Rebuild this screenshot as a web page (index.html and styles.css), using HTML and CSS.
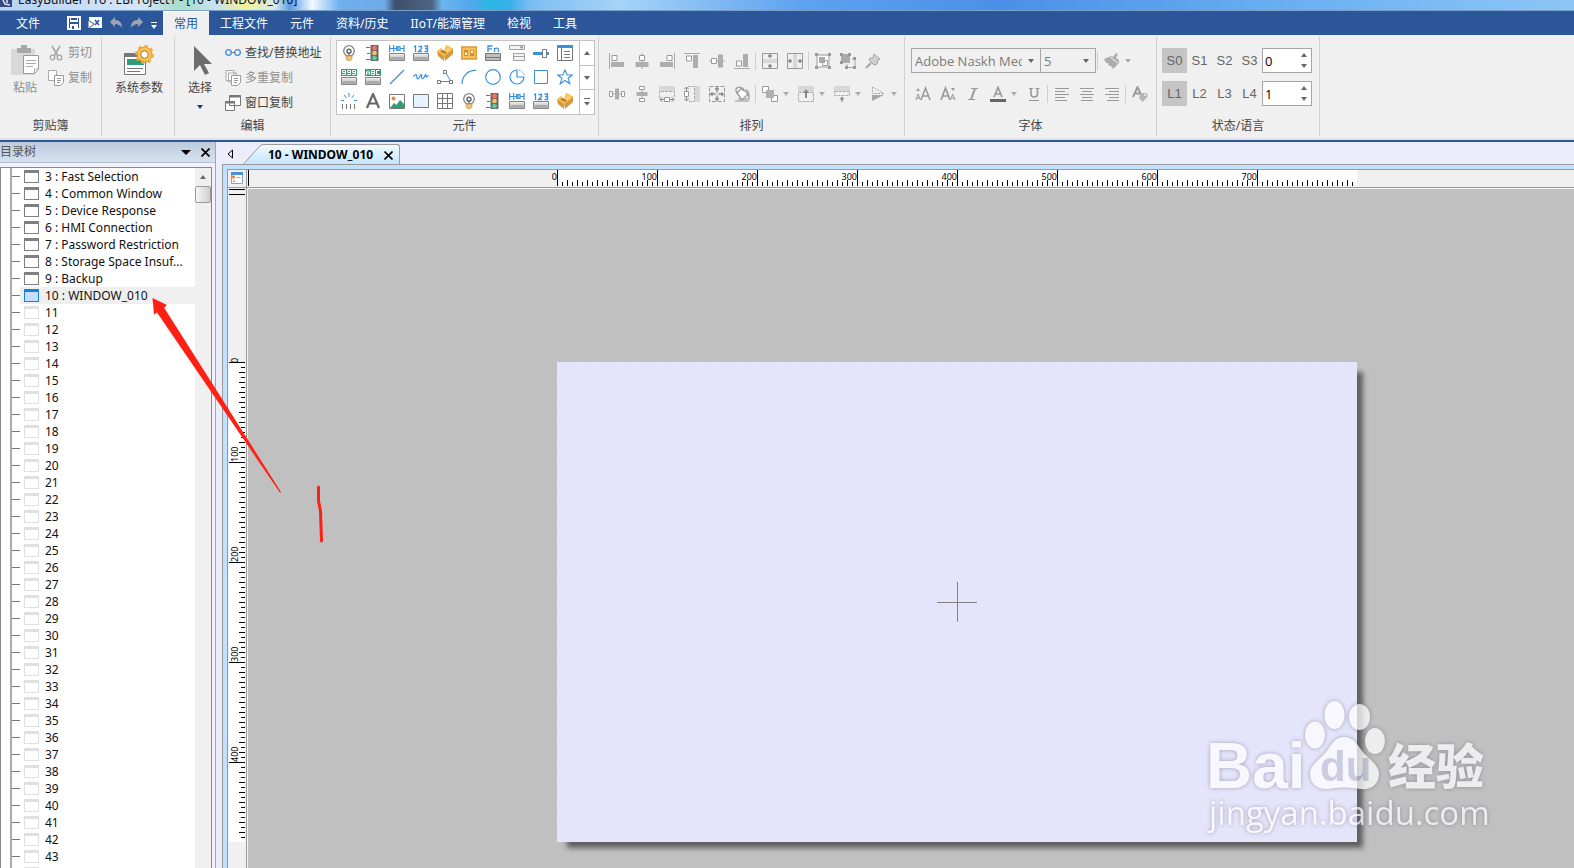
FILE: index.html
```html
<!DOCTYPE html>
<html lang="zh-CN">
<head>
<meta charset="utf-8">
<title>EasyBuilder Pro : EBProject1 - [10 - WINDOW_010]</title>
<link rel="stylesheet" href="styles.css">
</head>
<body>
<svg class="defs" aria-hidden="true">
  <defs>
    <linearGradient id="metal" x1="0" y1="0" x2="0" y2="1"><stop offset="0" stop-color="#f4f4f4"/><stop offset="1" stop-color="#a8a8a8"/></linearGradient>
    <symbol id="i-bulb" viewBox="0 0 16 16"><circle cx="8" cy="6" r="5.3" fill="#fff" stroke="#858585" stroke-width="1.3"/><circle cx="8" cy="6.2" r="2" fill="none" stroke="#555" stroke-width="1.3"/><path d="M8 8v3" stroke="#555"/><path d="M5 11h6v3l-2 2H7l-2-2z" fill="#f2c274" stroke="#b58a45" stroke-width=".6"/></symbol>
    <symbol id="i-traffic" viewBox="0 0 16 16"><path d="M1 2.500h4M2 8.500h3M1 14.500h4" stroke="#707070"/><path d="M5.500 0h8v16h-8z" fill="#6b6b6b"/><circle cx="9.500" cy="3" r="2.300" fill="#ff6d5a"/><circle cx="9.500" cy="8" r="2.300" fill="#ffc165"/><circle cx="9.500" cy="13" r="2.300" fill="#52d49a"/></symbol>
    <symbol id="i-hex" viewBox="0 0 16 16"><path d="M.7 0v7M.7 3.500h4M4.700 0v7M4.700 3.500h3M7.700 1v5M11 1.500H9v4h2zM11 3.500h4M15 0v7" fill="none" stroke="#3a8fd6" stroke-width="1.200"/><path d="M.5 8.500h15v7H.5z" fill="url(#metal)" stroke="#858585"/><path d="M2 13h12" stroke="#8e8e8e"/></symbol>
    <symbol id="i-num" viewBox="0 0 16 16"><path d="M1 2l1.500-1v6M5.500 1.500h3v2l-3 3h3.500M11.500 1h3v5.500h-3M12 3.500h2.500" fill="none" stroke="#3a8fd6" stroke-width="1.300"/><path d="M.5 8.500h15v7H.5z" fill="url(#metal)" stroke="#858585"/><path d="M2 13h12" stroke="#8e8e8e"/></symbol>
    <symbol id="i-switch" viewBox="0 0 16 16"><path d="M0 6l7 4v6l-6-5zM7 10l9-7v6l-8 7z" fill="#d39a3e"/><path d="M0 6l4-3 3 3 2-6 3 1 4 3-9 7z" fill="#fbc052"/><path d="M3 6.500L6 5l2 1.500 3-4 2.500 1.500L8 9z" fill="#b57e2b"/><path d="M8 6.500L11 2l3 2.500-4 3z" fill="#fdd283"/></symbol>
    <symbol id="i-toggle" viewBox="0 0 16 16"><path d="M.7 2h14.600v12H.7z" fill="#fbc052" stroke="#d99a37" stroke-width="1.300"/><path d="M3 5h4v6H3zM9 5h4v6H9z" fill="#c88d34"/><path d="M3.800 7.500h2.400V10H3.800zM9.800 5.800h2.400v2.400H9.800z" fill="#fff3d4"/></symbol>
    <symbol id="i-fn" viewBox="0 0 16 16"><path d="M7.500 1H3v6M3 3.800h4M9.500 7V3M9.500 4.200c1.500-1.800 4-1.300 4 .5V7" fill="none" stroke="#3a8fd6" stroke-width="1.300"/><path d="M.5 8.500h15v7H.5z" fill="#bdbdbd" stroke="#777"/><path d="M1 12.500h14" stroke="#777"/></symbol>
    <symbol id="i-combo" viewBox="0 0 16 16"><path d="M.5.500h15v4H.5zM4.500 8.500h11v7h-11zM4.500 11.500h11" fill="#f4f4f4" stroke="#a0a0a0"/><path d="M10.500 1.500h4l-2 2.500z" fill="#888"/></symbol>
    <symbol id="i-slider" viewBox="0 0 16 16"><path d="M0 8.500h16" stroke="#3a90e0" stroke-width="3"/><path d="M9.500 4.500h4v8h-4z" fill="#fff" stroke="#777"/></symbol>
    <symbol id="i-panel" viewBox="0 0 16 16"><path d="M.5.500h15v15H.5z" fill="#fff" stroke="#777"/><path d="M0 1.500h16" stroke="#3a90e0" stroke-width="3"/><path d="M4.500 3v12M7 6.500h6M7 9.500h6M7 12.500h6" stroke="#777"/></symbol>
    <symbol id="i-nine" viewBox="0 0 16 16"><path d="M0 0h16v7H0z" fill="#2f9e76"/><path d="M1 5.500h3.500v-4h-3v2h3M6 5.500h3.500v-4h-3v2h3M11 5.500h3.500v-4h-3v2h3" fill="none" stroke="#fff"/><path d="M.5 8.500h15v7H.5z" fill="url(#metal)" stroke="#858585"/><path d="M2 13h12" stroke="#8e8e8e"/></symbol>
    <symbol id="i-abc" viewBox="0 0 16 16"><path d="M0 0h16v7H0z" fill="#2f9e76"/><path d="M1.500 6V3l1.500-1.500L4.500 3v3M2 4h3M6.500 1.500h3v4h-3zM6.500 3.500h3M14.500 1.500h-3v4h3" fill="none" stroke="#fff"/><path d="M.5 8.500h15v7H.5z" fill="url(#metal)" stroke="#858585"/><path d="M2 13h12" stroke="#8e8e8e"/></symbol>
    <symbol id="i-line" viewBox="0 0 16 16"><path d="M1 15L15 1" stroke="#3a8fe0" stroke-width="1.200"/></symbol>
    <symbol id="i-free" viewBox="0 0 16 16"><path d="M.5 8C2 5 4 5 3.800 7.500S5 11 6.500 8 9 5 8.600 7.500 10 11 11.500 7.500 13 5 12.800 7 14 8 15.500 6" fill="none" stroke="#3a8fe0" stroke-width="1.200"/></symbol>
    <symbol id="i-poly" viewBox="0 0 16 16"><path d="M3 12.500h9M8.500 3.500l5 8" fill="none" stroke="#3a8fe0"/><path d="M.5 11.500h3v3h-3zM12.500 11.500h3v3h-3zM6.500 1.500h3v3h-3z" fill="#fff" stroke="#777"/></symbol>
    <symbol id="i-arc" viewBox="0 0 16 16"><path d="M1 15C1 7 7 1 15 1.500" fill="none" stroke="#3a8fe0" stroke-width="1.200"/></symbol>
    <symbol id="i-circle" viewBox="0 0 16 16"><circle cx="8" cy="8" r="7.300" fill="none" stroke="#3a8fe0" stroke-width="1.200"/></symbol>
    <symbol id="i-pie" viewBox="0 0 16 16"><path d="M8 1a7 7 0 1 0 7 7H8z" fill="none" stroke="#3a8fe0" stroke-width="1.200"/><path d="M10 1a7 7 0 0 1 5 5" fill="none" stroke="#777" stroke-dasharray="1.500 1.500"/></symbol>
    <symbol id="i-square" viewBox="0 0 16 16"><path d="M1.500 1.500h13v13h-13z" fill="none" stroke="#3a8fe0"/></symbol>
    <symbol id="i-star" viewBox="0 0 16 16"><path d="M8 1l2.100 5H15.300l-4.200 3.300 1.700 5.500L8 11.500l-4.800 3.300 1.700-5.500L.7 6h5.200z" fill="none" stroke="#3a8fe0" stroke-width="1.100"/></symbol>
    <symbol id="i-scale" viewBox="0 0 16 16"><path d="M3 2l2.500 3M8 0v4M13 2l-2.500 3M0 7.500h3M13 7.500h3" stroke="#3a8fe0"/><path d="M1.500 11v5M5.500 11v5M9.500 11v5M13.500 11v5" fill="none" stroke="#777"/></symbol>
    <symbol id="i-letter" viewBox="0 0 16 16"><path d="M2 15L8 1l6 14M4.200 10.500h7.600" fill="none" stroke="#666" stroke-width="2.200"/></symbol>
    <symbol id="i-image" viewBox="0 0 16 16"><path d="M.5 1.500h15v14H.5z" fill="#fff" stroke="#777"/><circle cx="4.500" cy="5.500" r="2" fill="#e98b3e"/><path d="M1 15l4-5 2.500 2L11 7l4 4v4z" fill="#2f9e76"/></symbol>
    <symbol id="i-rect" viewBox="0 0 16 16"><path d="M.5 1.500h15v13H.5z" fill="#e6f2ff" stroke="#777"/></symbol>
    <symbol id="i-table" viewBox="0 0 16 16"><path d="M.5.500h15v15H.5z" fill="#fff"/><path d="M.5 5.500h15M.5 10.500h15M5.500.500v15M10.500.500v15" stroke="#777"/><path d="M.5.500h15v15H.5z" fill="none" stroke="#777"/></symbol>
    <symbol id="a-left" viewBox="0 0 16 16"><path d="M.5 0v16" stroke="#aaa"/><path d="M3 2.500h5v5H3z" fill="#fff" stroke="#999"/><path d="M2 9h13v5H2z" fill="#adadad"/></symbol>
    <symbol id="a-center" viewBox="0 0 16 16"><path d="M8 0v16" stroke="#aaa"/><path d="M5.500 2.500h5v5h-5z" fill="#fff" stroke="#999"/><path d="M1.500 9h13v5h-13z" fill="#adadad"/></symbol>
    <symbol id="a-vspread" viewBox="0 0 16 16"><path d="M8 0v16" stroke="#aaa"/><path d="M5.500.500h5v3h-5zM5.500 12.500h5v3h-5z" fill="#fff" stroke="#999"/><path d="M2.500 6h11v4h-11z" fill="#adadad"/></symbol>
    <symbol id="a-same" viewBox="0 0 16 16"><path d="M.5.500h15v15H.5z" fill="none" stroke="#999"/><path d="M1 6h14v4H1z" fill="#d8d8d8"/><path d="M8 1v4M8 15v-4M6 3h4M6 13h4" stroke="#888" stroke-width="1.500"/></symbol>
    <symbol id="a-width" viewBox="0 0 16 16"><path d="M0 0h16v5H0z" fill="#d8d8d8"/><path d="M.5 12V5.500h15V12" fill="none" stroke="#aaa" stroke-dasharray="3 1"/><path d="M1 13.500h14M3.500 11L1 13.500 3.500 16M12.500 11l2.500 2.500-2.500 2.500" fill="none" stroke="#888"/><path d="M5.500 11.500h5v4h-5z" fill="#fff" stroke="#999"/></symbol>
    <symbol id="a-size" viewBox="0 0 16 16"><path d="M.5.500h15v15H.5z" fill="none" stroke="#999" stroke-dasharray="4 1.500"/><path d="M8 1v14M1 8h14M6 3h4M6 13h4M3 6v4M13 6v4" stroke="#888" stroke-width="1.300"/><path d="M6 6h4v4H6z" fill="#d8d8d8"/></symbol>
    <symbol id="a-rotate" viewBox="0 0 16 16"><path d="M1 15h14M4 13h11V9" fill="none" stroke="#c0c0c0" stroke-width="2"/><path d="M3 7l5-5 6 6-6 6z" fill="#fff" stroke="#999" stroke-width="1.300"/><path d="M3.500 7.500C0 4 3 0 6.500 1.500L10 5M12 3.500c3 2 3 5 2 7" fill="none" stroke="#999" stroke-width="1.300"/></symbol>
    <symbol id="a-group" viewBox="0 0 16 16"><path d="M2 2h12v12H2z" fill="#fff" stroke="#999"/><path d="M7.500 7.500h5v5h-5z" fill="none" stroke="#999"/><path d="M4 4h6v6H4z" fill="#aaa"/><path d="M0 0h3v3H0zM13 0h3v3h-3zM0 13h3v3H0zM13 13h3v3h-3z" fill="#999"/></symbol>
    <symbol id="a-ungroup" viewBox="0 0 16 16"><path d="M1 1h9v9H1z" fill="#aaa"/><path d="M0 0h3v3H0zM8 0h3v3H8zM0 8h3v3H0z" fill="#999"/><path d="M12 6h3v8.500H7V11" fill="none" stroke="#aaa"/><path d="M13 4h3v3h-3zM13 13h3v3h-3zM5 13h3v3H5z" fill="#999"/></symbol>
    <symbol id="a-pin" viewBox="0 0 16 16"><path d="M9 1l6 5-2 1-1 4-3 1-5-5 1-2 3 0z" fill="#d0d0d0" stroke="#a5a5a5"/><path d="M6 10l-5 5" stroke="#a5a5a5" stroke-width="2"/></symbol>
    <symbol id="a-layers" viewBox="0 0 16 16"><path d="M.5.500h6v6h-6zM9.500 9.500h6v6h-6z" fill="#fff" stroke="#999"/><path d="M4 4h8v8H4z" fill="#b0b0b0"/></symbol>
    <symbol id="a-up" viewBox="0 0 16 16"><path d="M0 0h16v6H0z" fill="#d8d8d8"/><path d="M.5 6.500h15v9H.5z" fill="none" stroke="#aaa" stroke-dasharray="3 1"/><path d="M7 12V7H5l3-4 3 4H9v5z" fill="#888"/></symbol>
    <symbol id="a-down" viewBox="0 0 16 16"><path d="M0 0h16v5H0z" fill="#d8d8d8"/><path d="M.5 5.500h15v4H.5z" fill="none" stroke="#aaa" stroke-dasharray="3 1"/><path d="M7.300 16v-2.500H5.500L8 10.500l2.500 3H8.700V16z" fill="#888"/></symbol>
    <symbol id="a-flip" viewBox="0 0 16 16"><path d="M2.500 1v6.500H14z" fill="none" stroke="#aaa" stroke-dasharray="2 1"/><path d="M2 15V9h12z" fill="#a8a8a8"/></symbol>
    <symbol id="t-big" viewBox="0 0 16 16"><path d="M6 14l4.500-12L15 14M7.500 10h6" fill="none" stroke="#999" stroke-width="1.500"/><path d="M1 14l2.200-6L5.500 14M2 12h3" fill="none" stroke="#999"/><path d="M1 5l2-3 2 3z" fill="#999"/></symbol>
    <symbol id="t-small" viewBox="0 0 16 16"><path d="M1 14L5.500 2 10 14M2.500 10h6" fill="none" stroke="#999" stroke-width="1.700"/><path d="M10.500 14l2.200-6 2.300 6M11.500 12h3" fill="none" stroke="#999"/><path d="M11 2h4l-2 3z" fill="#999"/></symbol>
    <symbol id="t-italic" viewBox="0 0 16 16"><path d="M6 2.500h7M3 13.500h7" stroke="#999" stroke-width="1.200"/><path d="M10 2.500l-4 11" stroke="#999" stroke-width="2"/></symbol>
    <symbol id="t-color" viewBox="0 0 16 16"><path d="M4 11L8 1.500 12 11M5.500 8h5" fill="none" stroke="#999" stroke-width="1.700"/><path d="M0 13h16v3H0z" fill="#666"/></symbol>
    <symbol id="t-under" viewBox="0 0 16 16"><path d="M3 2.500h4M9.500 2.500h4M3 14.500h10" stroke="#999"/><path d="M5 2v6c0 4 6.500 4 6.500 0V2" fill="none" stroke="#999" stroke-width="1.600"/></symbol>
    <symbol id="t-left" viewBox="0 0 16 16"><path d="M1 2.500h14M1 5.500h10M1 8.500h14M1 11.500h10M1 14.500h12" stroke="#999"/></symbol>
    <symbol id="t-mid" viewBox="0 0 16 16"><path d="M1 2.500h14M3 5.500h10M1 8.500h14M3 11.500h10M2 14.500h12" stroke="#999"/></symbol>
    <symbol id="t-style" viewBox="0 0 16 16"><path d="M1 11L5.500 1 10 11M3 7.500h5" fill="none" stroke="#999" stroke-width="1.900"/><path d="M8.500 7H14l1.500 1.500V11L10.500 16 7 12z" fill="#b5b5b5"/><circle cx="13" cy="9" r="1" fill="#f0f0f0"/></symbol>
    <symbol id="t-brush" viewBox="0 0 16 16"><path d="M0 6l7-3 2 1 3-4 2 1-2 4 3 2v3l-6 6-2-3-2 0-1-3-2 0z" fill="#adadad"/><path d="M6 4l8 6" stroke="#f0f0f0"/></symbol>
  </defs>
</svg>

<div class="app">
  <header class="titlebar">
    <svg class="logo" viewBox="0 0 12 8"><path d="M0 0h12v7H0z" fill="#34477f"/><path d="M3 0l2 4 5 1M7 0v3" fill="none" stroke="#dce4f4" stroke-width="1.500"/></svg>
    <span>EasyBuilder Pro : EBProject1 - [10 - WINDOW_010]</span>
  </header>

  <nav class="menu">
    <button class="file">文件</button>
    <div class="quick">
      <button aria-label="保存"><svg viewBox="0 0 14 14" width="14"><path d="M1 1h12v12H1z" fill="none" stroke="#fff" stroke-width="2"/><path d="M3 1h8v5H3zM3 8h8v5H3z" fill="#fff"/><path d="M4 2h6v2H4zM5 10h2v3H5z" fill="#2b579a"/></svg></button>
      <button aria-label="关闭窗口"><svg viewBox="0 0 14 14" width="14"><path d="M1 1h13v11H1z" fill="#fff"/><path d="M0 4l6 4-6 5z" fill="#fff" stroke="#2b579a"/><path d="M7 4l4 5M11 4L7 9" stroke="#2b579a" stroke-width="1.500"/></svg></button>
      <button aria-label="撤销"><svg viewBox="0 0 14 14" width="14"><path d="M1 6l5-5v3c5 0 7 3 7 8-2-3-4-4-7-4v3z" fill="#9da5b5"/></svg></button>
      <button aria-label="重做"><svg viewBox="0 0 14 14" width="14"><path d="M13 6L8 1v3C3 4 1 7 1 12c2-3 4-4 7-4v3z" fill="#9da5b5"/></svg></button>
      <button aria-label="更多"><svg viewBox="0 0 6 14" width="6"><path d="M0 6.500h6" stroke="#fff"/><path d="M0 9h6l-3 4z" fill="#fff"/></svg></button>
    </div>
    <button class="tab active">常用</button>
    <button class="tab">工程文件</button>
    <button class="tab">元件</button>
    <button class="tab">资料/历史</button>
    <button class="tab">IIoT/能源管理</button>
    <button class="tab">检视</button>
    <button class="tab">工具</button>
  </nav>

  <section class="ribbon">
    <div class="group g-clip">
      <div class="tools">
        <button class="big off"><svg viewBox="0 0 30 30"><path d="M1 4h24v26H1z" fill="#d9d9d9"/><path d="M7 8V3h4V0h6v3h4v5z" fill="#a8a8a8"/><path d="M13.500 10.500h15v14l-4 4h-11z" fill="#fff" stroke="#999"/><path d="M16 15.500h10M16 18.500h10M16 21.500h7M24.500 28v-4h4" fill="none" stroke="#aaa"/></svg>粘贴</button>
        <div class="stack">
          <button class="small off"><svg viewBox="0 0 16 16"><path d="M4 1l6 10M12 1L6 11" stroke="#a5a5a5" stroke-width="1.600"/><circle cx="4.500" cy="12.500" r="2.300" fill="none" stroke="#a5a5a5" stroke-width="1.300"/><circle cx="11.500" cy="12.500" r="2.300" fill="none" stroke="#a5a5a5" stroke-width="1.300"/></svg>剪切</button>
          <button class="small off"><svg viewBox="0 0 16 16"><path d="M.5.500h8v10h-8z" fill="#fff" stroke="#aaa"/><path d="M6.500 5.500h9v7l-3 3h-6z" fill="#fff" stroke="#999"/><path d="M9 8.500h4M9 10.500h4M9 12.500h3" stroke="#999"/></svg>复制</button>
        </div>
      </div>
      <h2>剪贴簿</h2>
    </div>
    <div class="group g-sys">
      <div class="tools">
        <button class="big"><svg viewBox="0 0 30 30"><path d="M.5 8.500h21v21H.5z" fill="#fff" stroke="#777"/><path d="M0 8h22v4H0z" fill="#777"/><path d="M3 14h17v6H3z" fill="#2f9e76"/><path d="M3 23.500h16M3 26.500h13" stroke="#777"/><circle cx="20.500" cy="9.500" r="7.500" fill="#fbc052" stroke="#e0982f"/><circle cx="20.500" cy="9.500" r="8.500" fill="none" stroke="#f0ab3c" stroke-width="2" stroke-dasharray="3.300 3.300"/><circle cx="20.500" cy="9.500" r="3.700" fill="#fff" stroke="#b07a2c"/></svg>系统参数</button>
      </div>
    </div>
    <div class="group g-edit">
      <div class="tools">
        <button class="big"><svg viewBox="0 0 30 30"><path d="M9 1v25l6-6 5 10 4-2-5-9h8z" fill="#6d6d6d"/></svg>选择<i class="caret blue"></i></button>
        <div class="stack">
          <button class="small"><svg viewBox="0 0 16 16"><circle cx="3.500" cy="7.500" r="2.800" fill="none" stroke="#3a8fe0" stroke-width="1.300"/><circle cx="12.500" cy="7.500" r="2.800" fill="none" stroke="#3a8fe0" stroke-width="1.300"/><path d="M6 7.500h4" stroke="#777"/></svg>查找/替换地址</button>
          <button class="small off"><svg viewBox="0 0 16 16"><path d="M1 .5h8v10H1zM3.500 3h8v9h-8z" fill="#fff" stroke="#aaa"/><path d="M6.500 5.500h9v7l-3 3h-6z" fill="#fff" stroke="#999"/><path d="M9 8.500h4M9 10.500h4M9 12.500h3" stroke="#999"/></svg>多重复制</button>
          <button class="small"><svg viewBox="0 0 16 16"><path d="M4.500.500h11v10h-11zM.5 6.500h9v9h-9z" fill="#fff" stroke="#777"/><path d="M4 1.500h12M0 7.500h10" stroke="#777" stroke-width="2"/></svg>窗口复制</button>
        </div>
      </div>
      <h2>编辑</h2>
    </div>
    <div class="group g-parts">
      <div class="gallery">
        <div class="cells">
          <button aria-label="位状态指示灯"><svg><use href="#i-bulb"/></svg></button><button aria-label="多状态指示灯"><svg><use href="#i-traffic"/></svg></button><button aria-label="位设置"><svg><use href="#i-hex"/></svg></button><button aria-label="字设置"><svg><use href="#i-num"/></svg></button><button aria-label="位切换"><svg><use href="#i-switch"/></svg></button><button aria-label="多状态切换"><svg><use href="#i-toggle"/></svg></button><button aria-label="功能键"><svg><use href="#i-fn"/></svg></button><button aria-label="项目选单"><svg><use href="#i-combo"/></svg></button><button aria-label="滑动开关"><svg><use href="#i-slider"/></svg></button><button aria-label="窗口"><svg><use href="#i-panel"/></svg></button>
          <button aria-label="数值"><svg><use href="#i-nine"/></svg></button><button aria-label="字符"><svg><use href="#i-abc"/></svg></button><button aria-label="直线"><svg><use href="#i-line"/></svg></button><button aria-label="手绘线"><svg><use href="#i-free"/></svg></button><button aria-label="折线"><svg><use href="#i-poly"/></svg></button><button aria-label="弧线"><svg><use href="#i-arc"/></svg></button><button aria-label="圆"><svg><use href="#i-circle"/></svg></button><button aria-label="扇形"><svg><use href="#i-pie"/></svg></button><button aria-label="矩形"><svg><use href="#i-square"/></svg></button><button aria-label="多边形"><svg><use href="#i-star"/></svg></button>
          <button aria-label="刻度"><svg><use href="#i-scale"/></svg></button><button aria-label="文字"><svg><use href="#i-letter"/></svg></button><button aria-label="图片"><svg><use href="#i-image"/></svg></button><button aria-label="方框"><svg><use href="#i-rect"/></svg></button><button aria-label="表格"><svg><use href="#i-table"/></svg></button><button aria-label="指示灯"><svg><use href="#i-bulb"/></svg></button><button aria-label="信号灯"><svg><use href="#i-traffic"/></svg></button><button aria-label="设置位"><svg><use href="#i-hex"/></svg></button><button aria-label="设置字"><svg><use href="#i-num"/></svg></button><button aria-label="切换开关"><svg><use href="#i-switch"/></svg></button>
        </div>
        <div class="scrollers">
          <button aria-label="上移"><i class="caret up"></i></button>
          <button aria-label="下移"><i class="caret"></i></button>
          <button aria-label="展开"><svg width="6" height="8" viewBox="0 0 6 8"><path d="M0 .5h6" stroke="#666"/><path d="M0 4h6L3 7.500z" fill="#666"/></svg></button>
        </div>
      </div>
      <h2>元件</h2>
    </div>
    <div class="group g-arrange">
      <div class="rows">
        <div class="line">
          <button aria-label="左对齐"><svg><use href="#a-left"/></svg></button><button aria-label="水平居中"><svg><use href="#a-center"/></svg></button><button aria-label="右对齐"><svg class="mirror"><use href="#a-left"/></svg></button><button aria-label="顶对齐"><svg class="turn-flip"><use href="#a-left"/></svg></button><button aria-label="垂直居中"><svg class="turn"><use href="#a-center"/></svg></button><button aria-label="底对齐"><svg class="turn"><use href="#a-left"/></svg></button><hr>
          <button aria-label="垂直置中"><svg><use href="#a-same"/></svg></button><button aria-label="水平置中"><svg class="turn"><use href="#a-same"/></svg></button><hr>
          <button aria-label="群组"><svg><use href="#a-group"/></svg></button><button aria-label="解散群组"><svg><use href="#a-ungroup"/></svg></button><button aria-label="固定"><svg><use href="#a-pin"/></svg></button>
        </div>
        <div class="line">
          <button aria-label="水平等距"><svg class="turn"><use href="#a-vspread"/></svg></button><button aria-label="垂直等距"><svg><use href="#a-vspread"/></svg></button><button aria-label="等宽"><svg><use href="#a-width"/></svg></button><button aria-label="等高"><svg class="turn-top"><use href="#a-width"/></svg></button><button aria-label="等大小"><svg><use href="#a-size"/></svg></button><button aria-label="旋转"><svg><use href="#a-rotate"/></svg></button><hr>
          <button class="drop" aria-label="图层"><svg><use href="#a-layers"/></svg><i class="caret dim"></i></button><button class="drop" aria-label="上移一层"><svg><use href="#a-up"/></svg><i class="caret dim"></i></button><button class="drop" aria-label="下移一层"><svg><use href="#a-down"/></svg><i class="caret dim"></i></button><button class="drop" aria-label="翻转"><svg><use href="#a-flip"/></svg><i class="caret dim"></i></button>
        </div>
      </div>
      <h2>排列</h2>
    </div>
    <div class="group g-font">
      <div class="rows">
        <div class="line">
          <span class="pick face"><select aria-label="字体"><option>Adobe Naskh Medium</option></select><i class="caret"></i></span><span class="pick size"><select aria-label="字号"><option>5</option></select><i class="caret"></i></span><hr>
          <button class="drop" aria-label="格式刷"><svg><use href="#t-brush"/></svg><i class="caret dim"></i></button>
        </div>
        <div class="line">
          <button aria-label="放大"><svg><use href="#t-big"/></svg></button><button aria-label="缩小"><svg><use href="#t-small"/></svg></button><button aria-label="斜体"><svg><use href="#t-italic"/></svg></button><button class="drop" aria-label="颜色"><svg><use href="#t-color"/></svg><i class="caret dim"></i></button><button aria-label="下划线"><svg><use href="#t-under"/></svg></button><hr>
          <button aria-label="靠左"><svg><use href="#t-left"/></svg></button><button aria-label="居中"><svg><use href="#t-mid"/></svg></button><button aria-label="靠右"><svg class="mirror"><use href="#t-left"/></svg></button><hr>
          <button aria-label="样式"><svg><use href="#t-style"/></svg></button>
        </div>
      </div>
      <h2>字体</h2>
    </div>
    <div class="group g-state">
      <div class="rows">
        <div class="line">
          <button class="key on">S0</button><button class="key">S1</button><button class="key">S2</button><button class="key">S3</button>
          <span class="spin"><input type="text" value="0" aria-label="状态"><span><i class="caret up"></i><i class="caret"></i></span></span>
        </div>
        <div class="line">
          <button class="key on">L1</button><button class="key">L2</button><button class="key">L3</button><button class="key">L4</button>
          <span class="spin"><input type="text" value="1" aria-label="语言"><span><i class="caret up"></i><i class="caret"></i></span></span>
        </div>
      </div>
      <h2>状态/语言</h2>
    </div>
  </section>

  <main class="work">
    <aside class="side">
      <header class="side-head"><span>目录树</span>
        <button aria-label="菜单"><svg width="10" height="6" viewBox="0 0 10 6"><path d="M0 1h10L5 6z"/></svg></button>
        <button aria-label="关闭"><svg width="9" height="9" viewBox="0 0 9 9"><path d="M.5.500l8 8M8.500.500l-8 8" stroke="#000" stroke-width="1.700"/></svg></button>
      </header>
      <div class="tree">
        <ul>
          <li>3 : Fast Selection</li><li>4 : Common Window</li><li>5 : Device Response</li><li>6 : HMI Connection</li><li>7 : Password Restriction</li><li>8 : Storage Space Insuf...</li><li>9 : Backup</li><li class="current">10 : WINDOW_010</li>
          <li class="free">11</li><li class="free">12</li><li class="free">13</li><li class="free">14</li><li class="free">15</li><li class="free">16</li><li class="free">17</li><li class="free">18</li><li class="free">19</li><li class="free">20</li><li class="free">21</li><li class="free">22</li><li class="free">23</li><li class="free">24</li><li class="free">25</li><li class="free">26</li><li class="free">27</li><li class="free">28</li><li class="free">29</li><li class="free">30</li><li class="free">31</li><li class="free">32</li><li class="free">33</li><li class="free">34</li><li class="free">35</li><li class="free">36</li><li class="free">37</li><li class="free">38</li><li class="free">39</li><li class="free">40</li><li class="free">41</li><li class="free">42</li><li class="free">43</li><li class="free"></li>
        </ul>
        <div class="bar"><button aria-label="向上滚动"><i class="caret up"></i></button><div class="thumb"></div></div>
      </div>
    </aside>

    <section class="editor">
      <div class="tabs">
        <button class="prev" aria-label="上一个"><svg width="6" height="10" viewBox="0 0 6 10"><path d="M5.500 1v8L1 5z" fill="none" stroke="#000"/></svg></button>
        <div class="doc">
          <svg width="20" height="21" viewBox="0 0 20 21"><defs><linearGradient id="tabfill" x1="0" y1="0" x2="0" y2="1"><stop offset="0" stop-color="#f0fbff"/><stop offset="1" stop-color="#c4e3ff"/></linearGradient></defs><path d="M0 21L16 3Q18 .5 20 .5V21z" fill="url(#tabfill)"/><path d="M0 20.500L16 3Q18 .5 20 .5" fill="none" stroke="#9a9a9a"/></svg>
          <div class="doc-body"><span>10 - WINDOW_010</span><button aria-label="关闭"><svg width="9" height="9" viewBox="0 0 9 9"><path d="M.5.500l8 8M8.500.500l-8 8" stroke="#000" stroke-width="1.600"/></svg></button></div>
        </div>
      </div>
      <div class="frame">
        <div class="corner"><svg width="12" height="12" viewBox="0 0 12 12"><path d="M.5.500h11v11H.5z" fill="#fff" stroke="#8aa3bd"/><path d="M0 1.500h12" stroke="#4b8fd8" stroke-width="3"/><path d="M1 3.500h3v3H1z" fill="#f08a3c"/><path d="M5.500 5.500h4M2.500 8v2M2.500 9.500h2" stroke="#aaa"/></svg></div>
        <div class="ruler-x">
          <svg width="800" height="16" class="scale">
            <defs><pattern id="tx" width="10" height="16" patternUnits="userSpaceOnUse"><path d="M0 10h1v6H0zM5 12h1v4H5z"/></pattern></defs>
            <rect width="800" height="16" fill="#fff"/><rect x="1" width="799" height="16" fill="url(#tx)"/>
            <path d="M.5 0v16M100.500 0v16M200.500 0v16M300.500 0v16M400.500 0v16M500.500 0v16M600.500 0v16M700.500 0v16" stroke="#000"/>
            <g text-anchor="end"><text x="0" y="10">0</text><text x="100" y="10">100</text><text x="200" y="10">200</text><text x="300" y="10">300</text><text x="400" y="10">400</text><text x="500" y="10">500</text><text x="600" y="10">600</text><text x="700" y="10">700</text></g>
          </svg>
        </div>
        <div class="ruler-y">
          <svg width="16" height="480" class="scale">
            <defs><pattern id="ty" width="16" height="10" patternUnits="userSpaceOnUse"><path d="M10 0h6v1h-6zM12 5h4v1h-4z"/></pattern></defs>
            <rect width="16" height="480" fill="#fff"/><rect y="1" width="16" height="479" fill="url(#ty)"/>
            <path d="M0 .5h16M0 100.500h16M0 200.500h16M0 300.500h16M0 400.500h16" stroke="#000"/>
            <text transform="translate(9 1) rotate(-90)">0</text><text transform="translate(9 100) rotate(-90)">100</text><text transform="translate(9 200) rotate(-90)">200</text><text transform="translate(9 300) rotate(-90)">300</text><text transform="translate(9 400) rotate(-90)">400</text>
          </svg>
        </div>
        <div class="canvas">
          <svg class="page" width="800" height="480">
            <defs><pattern id="dots" width="20" height="20" patternUnits="userSpaceOnUse"><path d="M0 0h1v1H0z" fill="#fff"/></pattern></defs>
            <rect width="800" height="480" fill="#e4e5fa"/><rect width="800" height="480" fill="url(#dots)"/>
            <path d="M380 240.500h40M400.500 220v40" stroke="#808080"/>
          </svg>
        </div>
      </div>
    </section>
  </main>

  <svg class="arrow" width="190" height="260" viewBox="150 290 190 260" aria-hidden="true">
    <path d="M152.500 298l14.500 7-3 2.500L281 492l-1 .8L157 312.500l-3 2z" fill="#fe2012"/>
    <path d="M318.500 487v14l2 10 1 30" fill="none" stroke="#fe2012" stroke-width="3" stroke-linecap="round" stroke-linejoin="round"/>
  </svg>

  <svg class="mark" width="300" height="150" viewBox="1200 690 300 150">
    <g fill="#fff">
      <text class="brand" x="1206" y="788">Bai</text>
      <ellipse cx="1315" cy="735" rx="10" ry="13.500"/><ellipse cx="1334.500" cy="715" rx="10" ry="14"/><ellipse cx="1359.500" cy="717" rx="10.500" ry="13"/><ellipse cx="1375" cy="741" rx="10" ry="13"/>
      <path d="M1344 737c9 0 13 7 18 14 6 8 17 13 17 23 0 12-10 16-19 15-11-2-21-2-32 0-10 1-18-5-18-15s11-15 17-23c5-8 9-14 17-14z"/>
      <text class="brand-cn" x="1388" y="784">经验</text>
      <text class="site" x="1209" y="825">jingyan.baidu.com</text>
    </g>
    <text class="du" x="1320" y="781">du</text>
  </svg>
</div>
</body>
</html>
```

FILE: styles.css
```css
* { box-sizing: border-box; }
body { margin: 0; font: 12px/16px "Noto Sans", "Noto Sans CJK SC", sans-serif; color: #444; }
button { border: 0; padding: 0; margin: 0; background: none; font: inherit; color: inherit; display: flex; align-items: center; justify-content: center; white-space: nowrap; }
h2 { margin: 0; font-size: 12px; font-weight: 400; line-height: 16px; text-align: center; }
hr { width: 1px; height: 18px; border: 0; margin: 0 1px; background: #cfcfcf; }
svg { display: block; flex: none; }
.defs { position: absolute; width: 0; height: 0; }
.app { position: relative; height: 100vh; display: flex; flex-direction: column; overflow: hidden; background: #ecedfb; }

.caret { border: 3px solid transparent; border-top: 4px solid #666; border-bottom: 0; }
.caret.up { border-top: 0; border-bottom: 4px solid #666; }
.caret.dim { border-top-color: #aaa; }
.caret.blue { border-top-color: #1f3f7a; }

.titlebar { flex: none; height: 11px; display: flex; align-items: flex-end; gap: 6px; padding-bottom: 2px; color: #111; border-bottom: 1px solid #7aa0cc; background: linear-gradient(90deg, #b7d2f3 0, #d6e6f8 140px, #a9dccb 180px, #c8e2ee 215px, #f0f09a 245px, #d8e8ea 275px, #5a9be4 290px, #f4f9fd 312px, #6db0f0 340px, #6fa9e4 385px, #3c4f6c 395px, #4d6482 432px, #6cb4ee 442px, #52a8ee 470px, #28b8e4 490px, #38b0ea 510px, #7dbdf3 530px, #a5d4f7 620px, #5fa2f0 800px, #4b8fe8 1000px, #6cb0f2 1300px, #8cc6f6 100%); }
.titlebar .logo { width: 12px; height: 8px; }

.menu { flex: none; height: 24px; display: flex; background: #2b579a; color: #fff; }
.menu .file { width: 56px; }
.menu .file, .tab { padding-top: 2px; }
.quick { width: 107px; display: flex; align-items: center; gap: 7px; padding-left: 11px; }
.tab { padding-left: 11px; padding-right: 11px; }
.tab.active { background: #f0f0f0; color: #2b579a; box-shadow: inset 0 1px #fff; }

.ribbon { flex: none; height: 107px; display: flex; padding: 2px 0 4px; background: #f0f0f0; border-bottom: 2px solid #2b579a; box-shadow: inset 0 -2px #e2e2e2; }
.group { flex: none; display: flex; flex-direction: column; justify-content: space-between; border-right: 1px solid #d0d0d0; padding: 3px 0 2px; }
.g-clip { width: 102px; } .g-sys { width: 73px; } .g-edit { width: 156px; } .g-parts { width: 268px; } .g-arrange { width: 306px; } .g-font { width: 252px; } .g-state { width: 163px; }
.tools { display: flex; padding: 5px 0 0 10px; gap: 8px; }
.g-sys .tools { padding: 5px 0 0 2px; justify-content: center; }
.g-edit .tools { gap: 10px; }
.big { flex-direction: column; justify-content: flex-start; gap: 5px; height: 66px; }
.big svg { width: 30px; height: 30px; }
.big .caret { margin-top: 4px; }
.stack { display: flex; flex-direction: column; gap: 9px; }
.small { gap: 4px; justify-content: flex-start; }
.small svg { width: 16px; height: 16px; }
.off { color: #8e8e8e; }

.gallery { margin: 0 3px 0 5px; height: 75px; display: flex; border: 1px solid #c3c3c3; background: #fff; }
.cells { flex: 1; display: grid; grid-template-columns: repeat(10, 24px); grid-auto-rows: 24px; }
.cells svg, .line svg { width: 16px; height: 16px; }
.scrollers { flex: none; width: 15px; display: flex; flex-direction: column; border-left: 1px solid #c3c3c3; }
.scrollers button { flex: 1; }
.scrollers button + button { border-top: 1px solid #c3c3c3; }

.rows { display: flex; flex-direction: column; gap: 8px; padding: 8px 0 0 5px; }
.line { display: flex; align-items: center; height: 25px; }
.line button { width: 25px; height: 25px; }
.line .drop { width: 36px; gap: 5px; }
.turn { transform: rotate(-90deg); }
.turn-top { transform: rotate(90deg); }
.turn-flip { transform: rotate(90deg) scaleY(-1); }
.mirror { transform: scaleX(-1); }

.pick { display: flex; align-items: center; position: relative; height: 25px; border: 1px solid #a6a6a6; margin-left: 1px; }
.pick select { appearance: none; width: 100%; border: 0; padding: 0 18px 0 3px; background: none; font-family: "Open Sans", sans-serif; font-size: 13px; color: #7b7b7b; text-overflow: clip; }
.pick .caret { position: absolute; right: 6px; }
.face { width: 130px; } .size { width: 56px; margin-left: -1px; }
.key { font: 13px "Liberation Sans", sans-serif; color: #666; }
.key.on { background: #c5c5c5; }
.spin { display: flex; width: 50px; height: 25px; border: 1px solid #a6a6a6; background: #fff; }
.spin input { width: 34px; border: 0; padding: 0 2px; font: 13px "Open Sans", sans-serif; color: #000; background: none; }
.spin span { flex: 1; display: flex; flex-direction: column; align-items: center; justify-content: space-between; padding: 4px 0; }

.work { flex: 1; min-height: 0; display: flex; }
.side { flex: none; width: 216px; display: flex; flex-direction: column; background: #f0f1fb; border-right: 1px solid #a5a5a5; }
.side-head { flex: none; height: 21px; display: flex; align-items: center; gap: 10px; padding-right: 5px; background: linear-gradient(#bccbdd, #d5e2f0); border-bottom: 1px solid #b6c2d0; }
.side-head span { flex: 1; color: #555; }
.tree { flex: 1; min-height: 0; margin: 4px 3px 0 0; display: flex; border: 1px solid #828790; border-bottom: 0; background: #fff; overflow: hidden; }
.tree ul { flex: 1; margin: 0 0 0 9px; padding: 0; list-style: none; border-left: 2px solid #aaa; color: #111; }
.tree li { height: 17px; display: flex; align-items: center; line-height: 17px; white-space: nowrap; }
.tree li::before { content: ""; order: -2; width: 8px; height: 1px; background: #777; margin-right: 4px; flex: none; }
.tree li::after { content: ""; box-sizing: border-box; order: -1; width: 15px; height: 13px; flex: none; border: 1px solid #808080; border-top-width: 3px; margin-right: 6px; }
.tree .current { background: linear-gradient(90deg, #fff 8px, #efefef 8px); }
.tree .current::after { border-color: #1a7fd9; background: #c2dfff; }
.tree .free::after { border-color: #e0e0e0; }
.bar { flex: none; width: 16px; background: #f0f0f0; display: flex; flex-direction: column; }
.bar button { height: 18px; }
.thumb { height: 17px; border: 1px solid #999; border-radius: 2px; background: linear-gradient(90deg, #f6f6f6, #cfcfcf); }

.editor { flex: 1; min-width: 0; display: flex; flex-direction: column; padding-left: 6px; }
.tabs { flex: none; height: 22px; display: flex; align-items: flex-end; }
.prev { width: 21px; height: 20px; justify-content: flex-start; padding-left: 5px; }
.doc { display: flex; height: 21px; margin-bottom: -1px; }
.doc-body { display: flex; align-items: center; gap: 11px; padding: 0 6px 0 5px; border: 1px solid #9a9a9a; border-width: 1px 1px 0 0; border-radius: 0 3px 0 0; background: linear-gradient(#f0fbff, #c4e3ff); font: bold 12px/16px "Noto Sans", sans-serif; color: #000; }
.frame { flex: 1; min-height: 0; display: grid; grid-template: 19px 1fr / 19px 1fr; border: 1px solid #999; border-width: 1px 0 0 1px; box-shadow: inset 4px 4px #c2e0ff, inset 5px 5px #999; padding: 4px 0 0 5px; background: #f0f0f0; }
.corner { border-right: 1px solid #999; border-bottom: 1px solid #999; display: flex; align-items: center; justify-content: center; }
.ruler-x { border-bottom: 1px solid #999; padding: 1px 0 0 310px; background: linear-gradient(#000, #000) 1px 1px / 1px 16px no-repeat; }
.ruler-y { border-right: 1px solid #999; padding: 174px 0 0 1px; min-height: 0; background: linear-gradient(#000, #000) 1px 1px / 16px 1px no-repeat, linear-gradient(#000, #000) 1px 6px / 16px 1px no-repeat; }
.scale { overflow: visible; font: 9px "Noto Sans", sans-serif; }
.canvas { min-width: 0; min-height: 0; overflow: hidden; border: 1px solid #f4f4f4; border-width: 1px 0 0 1px; background: #c0c0c0; padding: 173px 0 0 309px; }
.page { box-shadow: 8px 8px 5px -2px rgba(0, 0, 0, .5); }

.arrow { position: absolute; left: 150px; top: 290px; }
.mark { position: absolute; left: 1200px; top: 690px; opacity: .72; filter: drop-shadow(0 0 2px rgba(90, 90, 110, .7)); }
.brand { font: bold 64px "Liberation Sans", sans-serif; }
.brand-cn { font: 900 48px "Noto Sans CJK SC", sans-serif; }
.site { font: 33px "Open Sans", sans-serif; }
.du { font: bold 42px "Liberation Sans", sans-serif; fill: #c3c3d8; }
```
